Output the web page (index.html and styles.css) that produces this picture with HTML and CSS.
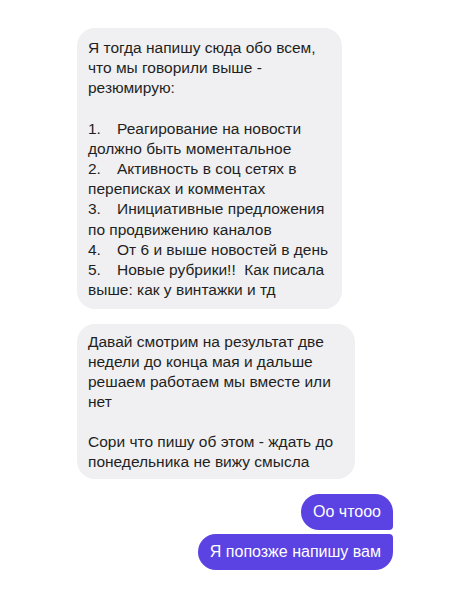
FILE: index.html
```html
<!DOCTYPE html>
<html lang="ru">
<head>
    <meta charset="UTF-8">
    <title>Чат</title>
    <link rel="stylesheet" href="styles.css">
</head>
<body>
    <div class="chat">
        <div class="msg in first">
            <p>Я тогда напишу сюда обо всем,<br>что мы говорили выше -<br>резюмирую:</p>
            <p class="gap"><span class="num">1.</span>Реагирование на новости<br>должно быть моментальное<br><span class="num">2.</span>Активность в соц сетях в<br>переписках и комментах<br><span class="num">3.</span>Инициативные предложения<br>по продвижению каналов<br><span class="num">4.</span>От 6 и выше новостей в день<br><span class="num">5.</span>Новые рубрики!!&nbsp; Как писала<br>выше: как у винтажки и тд</p>
        </div>

        <div class="msg in second">
            <p>Давай смотрим на результат две<br>недели до конца мая и дальше<br>решаем работаем мы вместе или<br>нет</p>
            <p class="gap">Сори что пишу об этом - ждать до<br>понедельника не вижу смысла</p>
        </div>

        <div class="out-group">
            <div class="msg out top">Оо чтооо</div>
            <div class="msg out bottom">Я попозже напишу вам</div>
        </div>
    </div>
</body>
</html>
```

FILE: styles.css
```css
body {
    margin: 0;
    background: #fff;
    font-family: "Liberation Sans", Arial, sans-serif;
    color: #1f1f22;
}
.chat {
    display: flex;
    flex-direction: column;
    padding: 28px 80px 0 77px;
}
.msg {
    font-size: 15.5px;
    line-height: 20px;
    border-radius: 18px;
}
.msg p {
    margin: 0;
    white-space: nowrap;
}
.msg .gap {
    margin-top: 20px;
}
.in {
    align-self: flex-start;
    background: #f0f0f3;
}
.first {
    width: 240px;
    padding: 10px 14px 9px 11px;
    line-height: 20.2px;
}
.second {
    width: 253px;
    padding: 8px 14px 7px 11px;
    margin-top: 15px;
}
.num {
    display: inline-block;
    width: 29px;
}
.out-group {
    display: flex;
    flex-direction: column;
    align-items: flex-end;
    gap: 4px;
    margin-top: 15px;
}
.out {
    background: #5b42e3;
    color: #fff;
    padding: 8px 12px;
    font-size: 16px;
}
.out.top {
    border-bottom-right-radius: 4px;
}
.out.bottom {
    border-top-right-radius: 4px;
}
```
